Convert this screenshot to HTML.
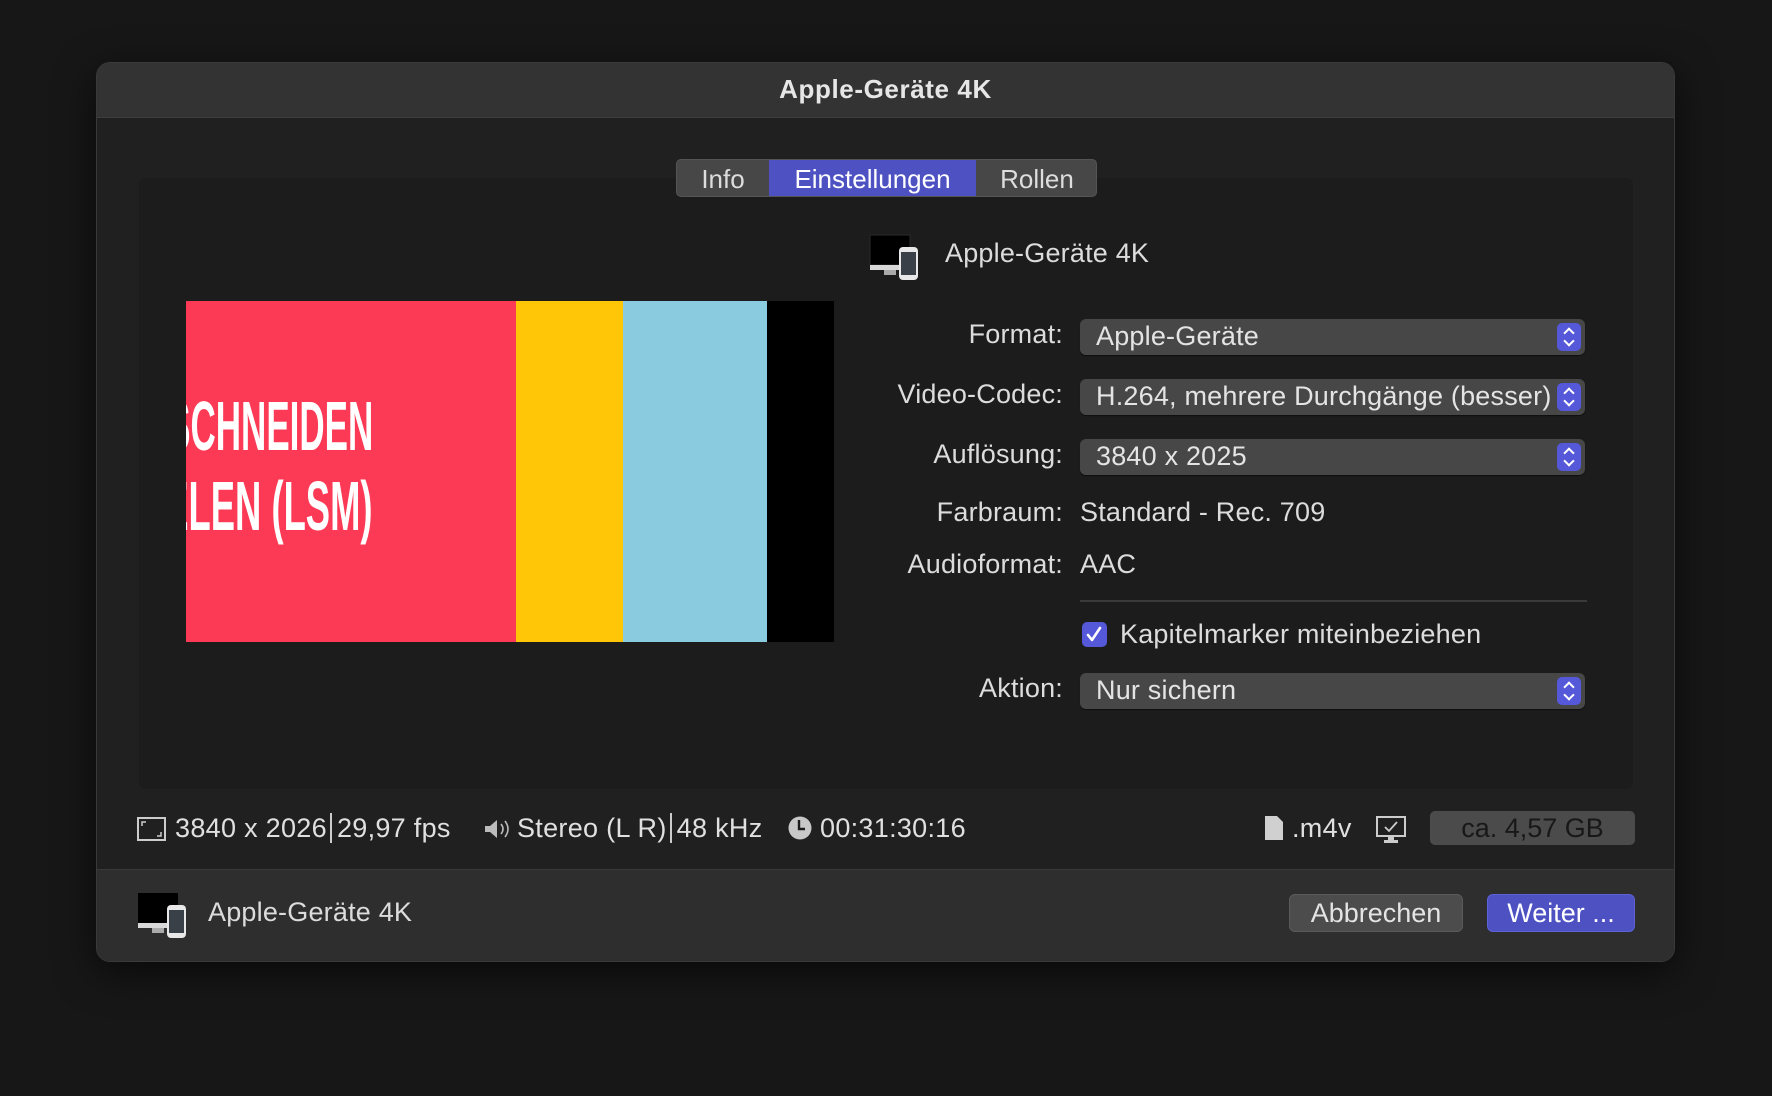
<!DOCTYPE html>
<html><head><meta charset="utf-8"><style>
*{margin:0;padding:0;box-sizing:border-box}
body{width:1772px;height:1096px;background:#171717;font-family:"Liberation Sans",sans-serif;color:#dcdcdc;position:relative;overflow:hidden}
.abs{position:absolute}
.dlg{left:96px;top:62px;width:1579px;height:900px;background:#202020;border-radius:14px;border:1px solid #3a3a3a;overflow:hidden;box-shadow:0 10px 40px rgba(0,0,0,.6)}
.title{left:0;top:0;width:100%;height:55px;background:#333;border-bottom:1px solid #3e3e3e;text-align:center;font-weight:bold;font-size:26px;letter-spacing:.6px;line-height:52px;color:#e6e6e6}
.panel{left:42px;top:115px;width:1494px;height:611px;background:#1c1c1c;border-radius:6px}
.tabs{left:676px;top:159px;width:421px;height:38px;background:#474747;border-radius:5px;font-size:26px;line-height:38px;color:#ddd;overflow:hidden;border:1px solid #555}
.tabs span{position:absolute;top:0;height:38px;text-align:center}
.lab{position:absolute;right:709px;font-size:27px;letter-spacing:.2px;text-align:right;color:#dcdcdc;white-space:nowrap}
.val{position:absolute;left:1080px;font-size:27px;letter-spacing:.2px;white-space:nowrap}
.pop{position:absolute;left:1080px;width:505px;height:36px;background:#474747;border-radius:6px;font-size:27px;letter-spacing:.2px;line-height:35px;padding-left:16px;color:#e4e4e4;box-shadow:0 1px 1px rgba(0,0,0,.5)}
.pop i{position:absolute;right:4px;top:4px;width:24px;height:28px;background:#5558d8;border-radius:5px}
.pop i:before{content:"";position:absolute;left:8px;top:6px;width:6px;height:6px;border-left:2px solid #fff;border-top:2px solid #fff;transform:rotate(45deg)}
.pop i:after{content:"";position:absolute;left:8px;top:14px;width:6px;height:6px;border-right:2px solid #fff;border-bottom:2px solid #fff;transform:rotate(45deg)}
.st{position:absolute;top:812px;font-size:27px;letter-spacing:.3px;line-height:32px;white-space:nowrap;color:#e0e0e0}
.foot{left:0;top:806px;width:100%;height:94px;background:#2e2e2e;border-top:1px solid #383838}
.btn{position:absolute;top:894px;height:38px;border-radius:6px;font-size:27px;line-height:37px;text-align:center}
.cond{font-family:"Liberation Sans Narrow","Liberation Sans",sans-serif;font-weight:bold;color:#fff;position:absolute;right:0;white-space:nowrap;transform-origin:right top}
.sep{display:inline-block;width:2px;height:30px;background:#ccc;vertical-align:-6px;margin:0 5px 0 3px}
</style></head><body>
<div class="abs dlg">
 <div class="abs title">Apple-Geräte 4K</div>
 <div class="abs panel"></div>
 <div class="abs foot"></div>
</div>
<div class="abs tabs">
 <span style="left:0;width:92px">Info</span>
 <span style="left:92px;width:207px;background:#4d51c2;color:#fff">Einstellungen</span>
 <span style="left:299px;width:122px">Rollen</span>
</div>
<svg class="abs" style="left:868px;top:233px" width="56" height="48" viewBox="0 0 56 48">
<rect x="2" y="2" width="40" height="30" fill="#000" stroke="#2a2a2a"/>
<rect x="2" y="32" width="40" height="5" fill="#d8d8d8"/>
<rect x="16" y="37" width="12" height="5" fill="#aaa"/>
<rect x="31" y="14" width="19" height="33" rx="4" fill="#e8e8e8"/>
<rect x="33" y="19" width="15" height="23" fill="#3a4048"/>
</svg>
<div class="val" style="left:945px;top:238px">Apple-Geräte 4K</div>
<div class="abs" style="left:186px;top:301px;width:648px;height:341px;overflow:hidden;background:#000">
 <div class="abs" style="left:0;top:0;width:330px;height:341px;background:#fc3a55"></div>
 <div class="abs" style="left:330px;top:0;width:107px;height:341px;background:#fec606"></div>
 <div class="abs" style="left:437px;top:0;width:144px;height:341px;background:#8acbdf"></div>
 <div class="abs" style="left:0;top:0;width:187px;height:341px;overflow:hidden">
  <div class="cond" style="top:90px;font-size:70px;line-height:70px;transform:scaleX(.5)">SCHNEIDEN</div>
  <div class="cond" style="top:170px;font-size:70px;line-height:70px;transform:scaleX(.52)">ELEN (LSM)</div>
 </div>
</div>
<div class="lab" style="top:319px">Format:</div>
<div class="pop" style="top:319px">Apple-Geräte<i></i></div>
<div class="lab" style="top:379px">Video-Codec:</div>
<div class="pop" style="top:379px">H.264, mehrere Durchgänge (besser)<i></i></div>
<div class="lab" style="top:439px">Auflösung:</div>
<div class="pop" style="top:439px">3840 x 2025<i></i></div>
<div class="lab" style="top:497px">Farbraum:</div>
<div class="val" style="top:497px">Standard - Rec. 709</div>
<div class="lab" style="top:549px">Audioformat:</div>
<div class="val" style="top:549px">AAC</div>
<div class="abs" style="left:1080px;top:600px;width:507px;height:2px;background:#3a3a3a"></div>
<div class="abs" style="left:1082px;top:622px;width:25px;height:25px;background:#5558d8;border-radius:5px">
 <svg width="25" height="25" viewBox="0 0 25 25"><path d="M6 13l4 5 8-12" fill="none" stroke="#fff" stroke-width="2.6" stroke-linecap="round" stroke-linejoin="round"/></svg>
</div>
<div class="val" style="left:1120px;top:619px">Kapitelmarker miteinbeziehen</div>
<div class="lab" style="top:673px">Aktion:</div>
<div class="pop" style="top:673px">Nur sichern<i></i></div>
<svg class="abs" style="left:137px;top:817px" width="29" height="24"><rect x="1" y="1" width="27" height="22" fill="none" stroke="#ccc" stroke-width="2"/><path d="M5 9V5h4M24 15v4h-4" stroke="#ccc" fill="none" stroke-width="1.5"/></svg>
<div class="st" style="left:175px">3840 x 2026<span class="sep"></span>29,97 fps</div>
<svg class="abs" style="left:483px;top:818px" width="28" height="22"><path d="M2 8h5l7-6v18l-7-6H2z" fill="#bbb"/><path d="M18 6q4 5 0 10M22 3q6 8 0 16" stroke="#bbb" fill="none" stroke-width="1.6"/></svg>
<div class="st" style="left:517px">Stereo (L R)<span class="sep"></span>48 kHz</div>
<svg class="abs" style="left:788px;top:816px" width="24" height="24"><circle cx="12" cy="12" r="11.5" fill="#c8c8c8"/><path d="M11 4v9h6" stroke="#1c1c1c" stroke-width="2.4" fill="none"/></svg>
<div class="st" style="left:820px">00:31:30:16</div>
<svg class="abs" style="left:1264px;top:815px" width="20" height="26"><path d="M1 1h12l6 6v18H1z" fill="#d0d0d0"/></svg>
<div class="st" style="left:1292px">.m4v</div>
<svg class="abs" style="left:1376px;top:816px" width="30" height="28"><rect x="1" y="1" width="28" height="19" fill="none" stroke="#ccc" stroke-width="2"/><path d="M9 11l4 4 8-9" stroke="#ccc" fill="none" stroke-width="1.8"/><rect x="12" y="20" width="6" height="4" fill="#ccc"/><rect x="8" y="24" width="14" height="3" fill="#ccc"/></svg>
<div class="abs" style="left:1430px;top:811px;width:205px;height:34px;background:#4b4b4b;border-radius:5px;font-size:27px;line-height:34px;text-align:center;color:#181818">ca. 4,57 GB</div>
<svg class="abs" style="left:136px;top:891px" width="56" height="48" viewBox="0 0 56 48">
<rect x="2" y="2" width="40" height="30" fill="#000"/>
<rect x="2" y="32" width="40" height="5" fill="#d8d8d8"/>
<rect x="16" y="37" width="12" height="5" fill="#aaa"/>
<rect x="31" y="14" width="19" height="33" rx="4" fill="#e8e8e8"/>
<rect x="33" y="19" width="15" height="23" fill="#3a4048"/>
</svg>
<div class="val" style="left:208px;top:897px">Apple-Geräte 4K</div>
<div class="btn" style="left:1289px;width:174px;background:#4c4c4c;color:#e4e4e4;border:1px solid #5a5a5a">Abbrechen</div>
<div class="btn" style="left:1487px;width:148px;background:#4d51c2;color:#fff;border:1px solid #5d62d8">Weiter ...</div>
</body></html>
